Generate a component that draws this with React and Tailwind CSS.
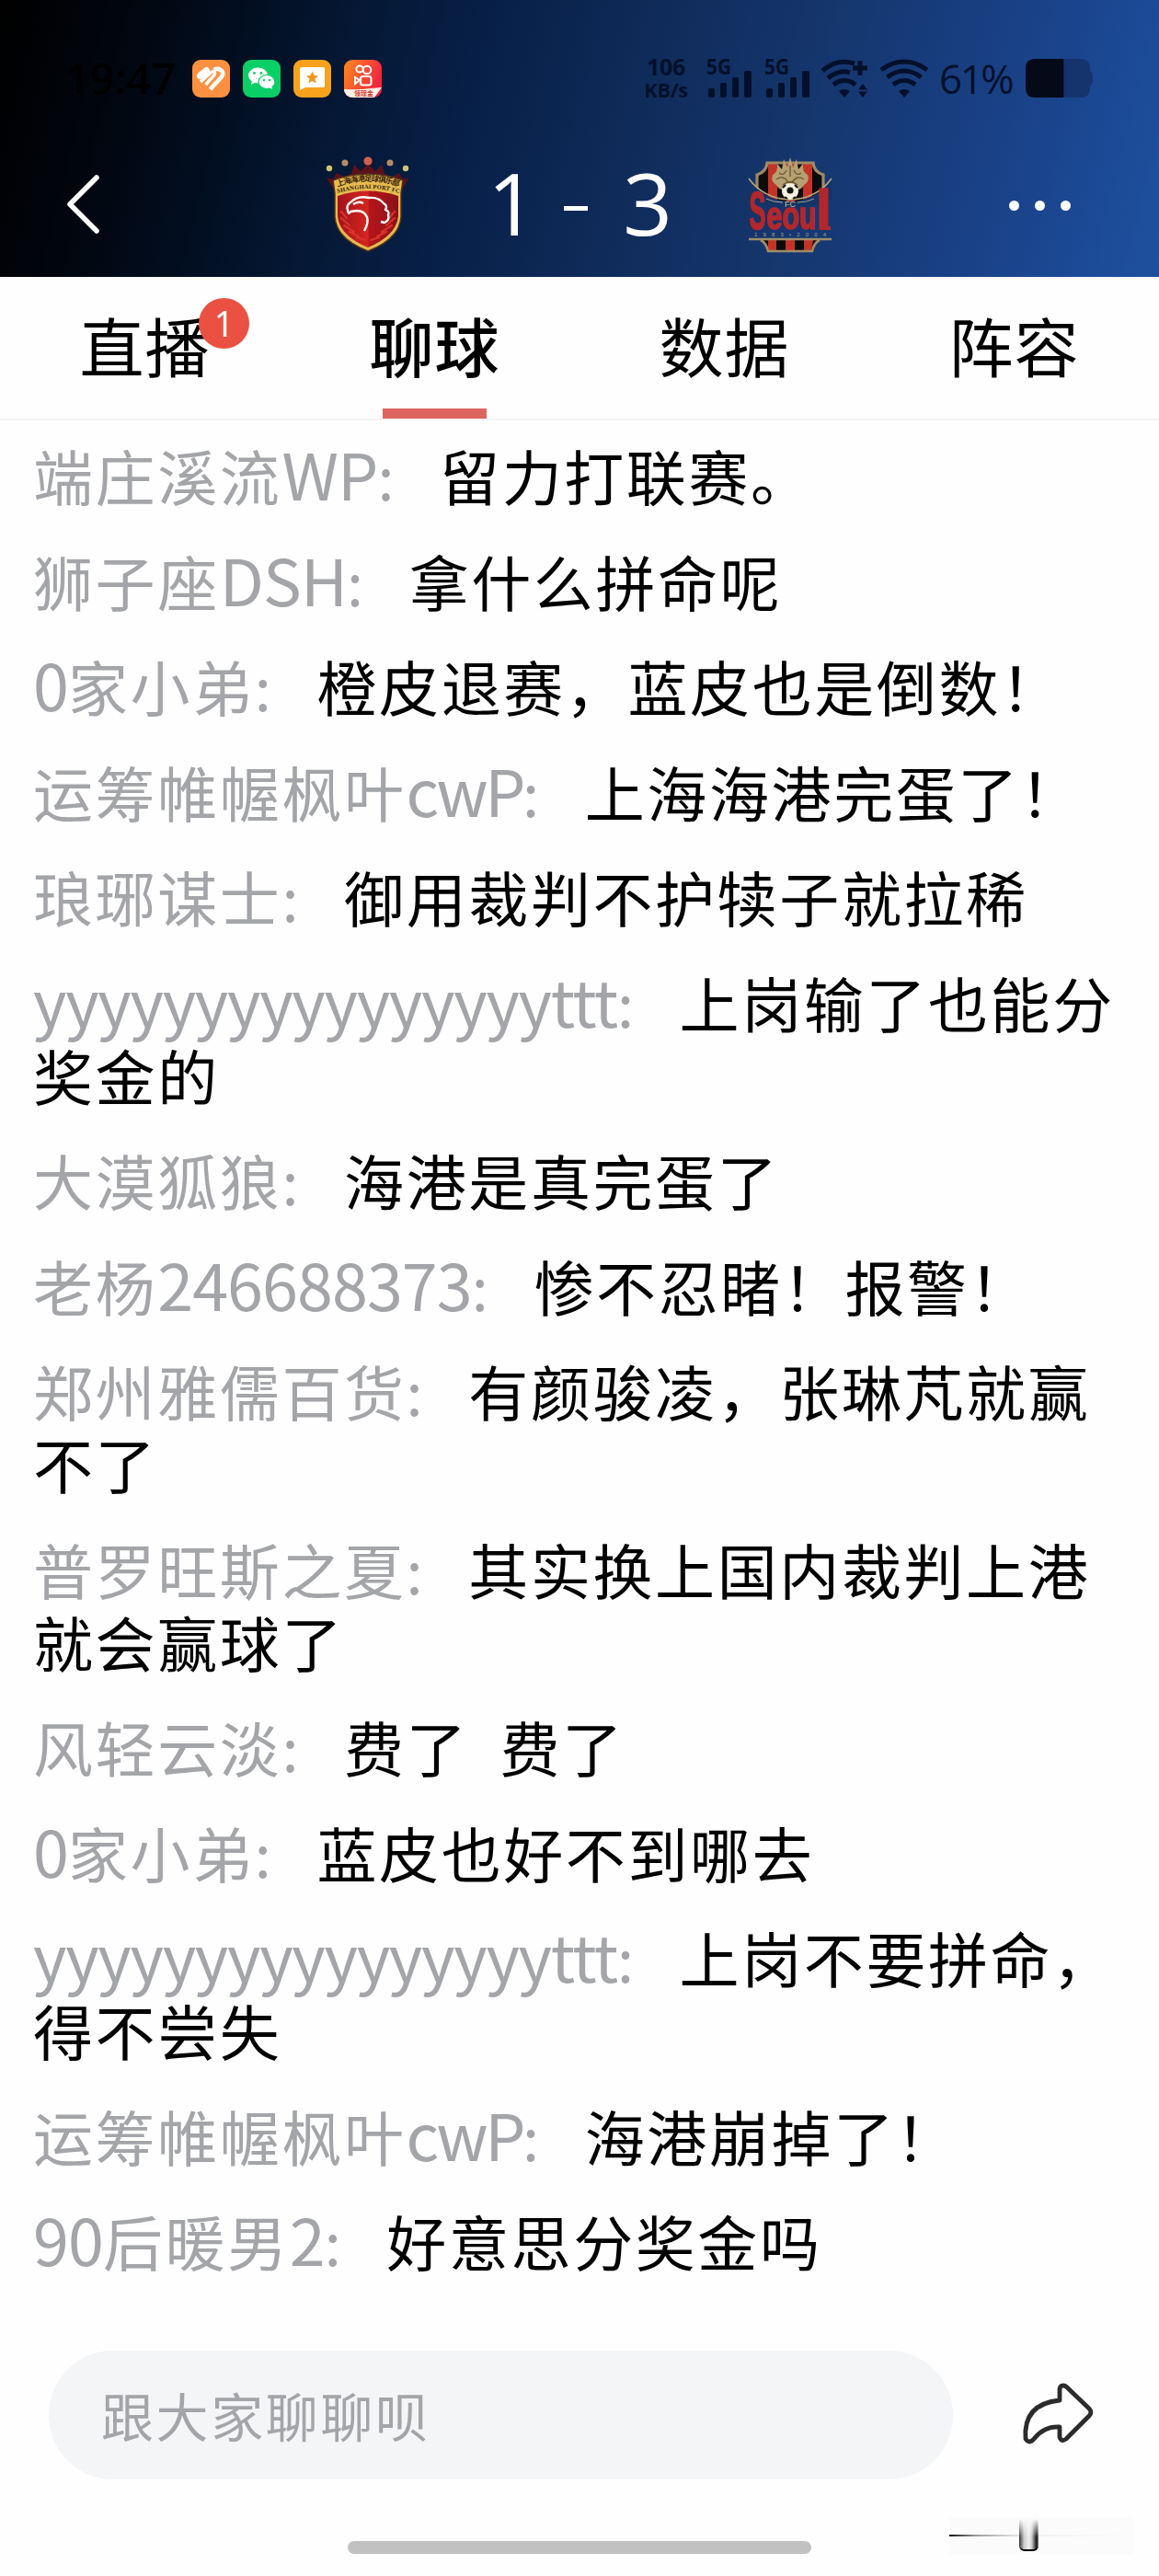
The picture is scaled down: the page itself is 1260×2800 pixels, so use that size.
const tabs = [
  { name: "直播", badge: 1 },
  { name: "聊球", active: true },
  { name: "数据" },
  { name: "阵容" },
];

const messages = [
  { user: "端庄溪流WP", text: "留力打联赛。" },
  { user: "狮子座DSH", text: "拿什么拼命呢" },
  { user: "0家小弟", text: "橙皮退赛，蓝皮也是倒数！" },
  { user: "运筹帷幄枫叶cwP", text: "上海海港完蛋了！", spacing: "tracking-[-3.4px]" },
  { user: "琅琊谋士", text: "御用裁判不护犊子就拉稀" },
  { user: "yyyyyyyyyyyyyyyyttt", text: "上岗输了也能分奖金的", spacing: "tracking-[-1.3px]" },
  { user: "大漠狐狼", text: "海港是真完蛋了" },
  { user: "老杨246688373", text: "惨不忍睹！报警！" },
  { user: "郑州雅儒百货", text: "有颜骏凌，张琳芃就赢不了" },
  { user: "普罗旺斯之夏", text: "其实换上国内裁判上港就会赢球了" },
  { user: "风轻云淡", text: "费了  费了" },
  { user: "0家小弟", text: "蓝皮也好不到哪去" },
  { user: "yyyyyyyyyyyyyyyyttt", text: "上岗不要拼命，得不尝失", spacing: "tracking-[-1.3px]" },
  { user: "运筹帷幄枫叶cwP", text: "海港崩掉了！", spacing: "tracking-[-3.4px]" },
  { user: "90后暖男2", text: "好意思分奖金吗" },
];

function AppIcons() {
  return (
    <div className="flex gap-[14px] ml-[20px]">
      <svg width="41" height="41" viewBox="0 0 41 41">
        <rect width="41" height="41" rx="9" fill="#fb9140" />
        <path d="M8.500 17.500 L15.500 11.500" stroke="#fff" strokeWidth="7" strokeLinecap="round" />
        <path d="M9 24 L20 14 Q22.500 12 24 13.500 Q25.500 15 23.500 17 L14.500 27" fill="none" stroke="#fff" strokeWidth="3.400" />
        <path d="M19.500 32 L31.500 19 Q35 15 31.500 11.500 Q28 8.500 23.500 11" fill="none" stroke="#fff" strokeWidth="4.600" />
      </svg>
      <svg width="41" height="41" viewBox="0 0 41 41">
        <rect width="41" height="41" rx="9" fill="#09cf66" />
        <ellipse cx="16.500" cy="17" rx="10.500" ry="8.500" fill="#fff" />
        <path d="M10 22 L9 27 L15 24Z" fill="#fff" />
        <ellipse cx="26" cy="24" rx="9" ry="7.500" fill="#fff" stroke="#09cf66" strokeWidth="1.200" />
        <path d="M28 30 L32 32 L31 27Z" fill="#fff" />
        <g fill="#09cf66">
          <circle cx="12.500" cy="14.500" r="1.400" />
          <circle cx="20" cy="14.500" r="1.400" />
          <circle cx="23" cy="22" r="1.200" />
          <circle cx="29" cy="22" r="1.200" />
        </g>
      </svg>
      <svg width="41" height="41" viewBox="0 0 41 41">
        <rect width="41" height="41" rx="9" fill="#f7a11d" />
        <path d="M9 8 H32 Q34 8 34 10 V28 Q34 30 32 30 H13 L7 33 V10 Q7 8 9 8Z" fill="#fff" />
        <path d="M20.500 12.500 L22.500 17 L27 17.500 L23.500 20.500 L24.500 25.500 L20.500 23 L16.500 25.500 L17.500 20.500 L14 17.500 L18.500 17Z" fill="#f0961a" />
      </svg>
      <svg width="41" height="41" viewBox="0 0 41 41">
        <defs>
          <linearGradient id="ks" x1="0" y1="0" x2="1" y2="0.400">
            <stop offset="0" stopColor="#ff8a1f" />
            <stop offset="1" stopColor="#f2253f" />
          </linearGradient>
          <clipPath id="ksClip">
            <rect width="41" height="41" rx="9" />
          </clipPath>
        </defs>
        <g clipPath="url(#ksClip)">
          <rect width="41" height="41" fill="url(#ks)" />
          <path d="M0 32 Q14 33 30 31 L41 30 L33 41 H0Z" fill="#fff3ea" />
          <g fill="none" stroke="#fff" strokeWidth="2">
            <circle cx="17" cy="10" r="3.600" />
            <circle cx="25" cy="11" r="4.200" />
            <rect x="18" y="18" width="11.500" height="9.500" rx="2.500" />
            <path d="M12 19 L17 22 L12 26Z" />
          </g>
          <text x="11" y="39" fontSize="7" fontWeight="700" fill="#d03428">领现金</text>
        </g>
      </svg>
    </div>
  );
}

function Signal() {
  return (
    <svg className="overflow-visible" width="50" height="42" viewBox="0 0 50 42" fill="#04102b">
      <text x="0" y="17" fontSize="23" fontWeight="700" fontFamily="Open Sans" textLength="27" lengthAdjust="spacingAndGlyphs">5G</text>
      <rect x="2" y="32" width="7" height="10" rx="2" />
      <rect x="15" y="26" width="7" height="16" rx="2" />
      <rect x="28" y="20" width="7" height="22" rx="2" />
      <rect x="41" y="13" width="8" height="29" rx="2" />
    </svg>
  );
}

function WifiPlus() {
  return (
    <svg width="52" height="43" viewBox="0 0 52 43" fill="none" stroke="#04102b" strokeWidth="5">
      <path d="M1 13 Q17 -1 36 5" />
      <path d="M7 21 Q20 11 31 15" />
      <path d="M13 28 Q25 19 37 28" />
      <path d="M19 35 Q25 31 31 35 L25 42Z" fill="#04102b" stroke="none" />
      <path d="M42 2 V18 M34 10 H50" />
      <path d="M45 27 L50 33.500 H40Z M45 42 L50 35.500 H40Z" fill="#04102b" stroke="none" />
    </svg>
  );
}

function Wifi() {
  return (
    <svg width="52" height="43" viewBox="0 0 52 43" fill="none" stroke="#04102b" strokeWidth="5">
      <path d="M1 12 Q26 -6 51 12" />
      <path d="M7.500 20 Q26 6 44.500 20" />
      <path d="M14 28 Q26 19 38 28" />
      <path d="M20 35 Q26 31 32 35 L26 42Z" fill="#04102b" stroke="none" />
    </svg>
  );
}

function StatusBar() {
  return (
    <div className="flex items-center h-[42px] mt-[64px]">
      <div className="w-[118px] ml-[71px] text-[47px] leading-[42px] font-['Open_Sans'] font-semibold text-black">
        19:47
      </div>
      <AppIcons />
      <div className="flex flex-col items-center ml-[283px] w-[52px] text-[#04102b] font-bold text-[25px] leading-[25px] tracking-[-0.5px] font-['Open_Sans']">
        <span>106</span>
        <span className="text-[22px]">KB/s</span>
      </div>
      <div className="flex ml-[18px] gap-[13px]">
        <Signal />
        <Signal />
      </div>
      <div className="ml-[12px] flex gap-[12px]">
        <WifiPlus />
        <Wifi />
      </div>
      <div className="ml-[12px] w-[94px] text-[44px] leading-[42px] tracking-[-2.5px] font-['Open_Sans'] font-medium text-[#04102b] whitespace-nowrap">61%</div>
      <svg width="74" height="42" viewBox="0 0 74 42">
        <path d="M42 0 H60 Q70 0 70 10 V13 Q73 14 73 21 Q73 28 70 29 V32 Q70 42 60 42 H42Z" fill="#15346e" />
        <path d="M10 0 H41.500 V42 H10 Q0 42 0 32 V10 Q0 0 10 0Z" fill="#040a17" />
      </svg>
    </div>
  );
}

function ShanghaiCrest() {
  return (
    <svg width="92" height="106" viewBox="0 0 92 106">
      <defs>
        <linearGradient id="sh" x1="0" y1="0" x2="1" y2="0">
          <stop offset="0" stopColor="#a3131a" />
          <stop offset="0.500" stopColor="#d5251f" />
          <stop offset="0.520" stopColor="#b5161a" />
          <stop offset="1" stopColor="#8c1118" />
        </linearGradient>
        <path id="shArc" d="M13 33 Q46 21 80 33" />
        <path id="shArc2" d="M13 40 Q46 30 80 40" />
      </defs>
      <path d="M1 23 L8 25 L12 18 L20 22 L28 19 L31 9 L38 16 L46 8 L54 16 L61 9 L64 19 L72 22 L80 18 L84 25 L91 23 L82 38 H10Z" fill="#5c1118" />
      <circle cx="4" cy="13" r="3.200" fill="#d0c474" />
      <circle cx="21" cy="7" r="3.500" fill="#b98a63" />
      <circle cx="46" cy="5" r="4.600" fill="#d2604a" />
      <circle cx="70" cy="7" r="3.500" fill="#b98a63" />
      <circle cx="87" cy="13" r="3.200" fill="#d0c474" />
      <path d="M8 26 Q46 12 84 26 L82 40 V66 Q80 90 46 103 Q12 90 10 66 V40Z" fill="#e6bb4e" stroke="#53301d" strokeWidth="1.500" />
      <path d="M13 43 Q46 32 79 43 V65 Q77 86 46 99 Q15 86 13 65Z" fill="url(#sh)" />
      <g fill="none" stroke="#d8332c" strokeWidth="2.200" strokeLinecap="round">
        <path d="M17 60 L23 67 M17 67 L26 75 M20 75 L31 82 M26 82 L36 87 M34 88 L43 91" />
        <path d="M75 60 L69 67 M75 67 L66 75 M72 75 L61 82 M66 82 L56 87 M58 88 L49 91" />
      </g>
      <path
        d="M42 81 Q47 72 45 66 Q42 59 34 59 L27 60 Q25 64 24 59 Q22 53 27 50 Q35 42 47 45 Q58 44 63 51 Q68 54 65 58 Q70 60 68 64 Q70 69 64 72 L60 71 M30 52 Q36 48 41 51"
        fill="none"
        stroke="#fff"
        strokeWidth="2.400"
        strokeLinejoin="round"
      />
      <text fontSize="8.500" fontWeight="700" fill="#3a230d">
        <textPath href="#shArc" textLength="68">上海海港足球俱乐部</textPath>
      </text>
      <text fontSize="6.500" fontWeight="700" fill="#2c1a0c" fontFamily="Liberation Serif">
        <textPath href="#shArc2" textLength="68">SHANGHAI PORT FC</textPath>
      </text>
    </svg>
  );
}

function SeoulCrest() {
  return (
    <svg width="92" height="106" viewBox="0 0 92 106">
      <defs>
        <clipPath id="seTop">
          <path d="M22 8 H70 Q71 18 81 20 V44 Q46 60 11 44 V20 Q21 18 22 8Z" />
        </clipPath>
      </defs>
      <g clipPath="url(#seTop)">
        <rect width="92" height="60" fill="#0b0a0d" />
        <rect x="22" width="10" height="60" fill="#c33327" />
        <rect x="42" width="9" height="60" fill="#c33327" />
        <rect x="60" width="10" height="60" fill="#c33327" />
      </g>
      <path d="M10 36 V20 Q20 17 21 7 H71 Q72 17 82 20 V36" fill="none" stroke="#9d8a63" strokeWidth="3.200" />
      <path d="M27 20 Q33 17 32 8 L37 14 L39 3 L43 12 L46 1 L49 12 L53 3 L55 14 L60 8 Q59 17 65 20 Q68 27 61 31 Q58 38 46 37 Q34 38 31 31 Q24 27 27 20Z" fill="#b4a073" />
      <g fill="none" stroke="#6c592f" strokeWidth="1.300">
        <path d="M34 18 Q39 22 42 15 M58 18 Q53 22 50 15 M46 10 V22 M31 25 Q38 20 43 27 Q46 31 49 27 Q54 20 61 25 M38 31 Q46 24 54 31" />
      </g>
      <path d="M1 24 Q17 48 46 49 Q75 48 91 24 V46 Q75 56 46 56 Q17 56 1 46Z" fill="#143468" />
      <path d="M1 24 Q17 46 46 47 Q75 46 91 24" fill="none" stroke="#b9a67a" strokeWidth="1.600" />
      <circle cx="46" cy="38" r="9" fill="#f5f0df" />
      <circle cx="46" cy="37" r="3.600" fill="#141414" />
      <path d="M38 34 L41 31 M51 31 L54 34 M40 44 L43 46 M49 46 L52 44" stroke="#141414" strokeWidth="2" />
      <g fill="#b2272c" stroke="#b2272c" strokeWidth="1.600" fontFamily="Liberation Sans" fontWeight="700">
        <text x="1" y="79" fontSize="58" textLength="18" lengthAdjust="spacingAndGlyphs">S</text>
        <text x="20" y="79" fontSize="42" textLength="54" lengthAdjust="spacingAndGlyphs">eou</text>
        <text x="74" y="79" fontSize="62" textLength="17" lengthAdjust="spacingAndGlyphs">l</text>
        <path d="M80 78 H90" strokeWidth="4" />
      </g>
      <text x="40" y="55" fontSize="9" fill="#c9bb91" fontFamily="Liberation Sans">FC</text>
      <path d="M20 46 Q28 50 38 50 M54 50 Q64 50 72 46" fill="none" stroke="#a8a284" />
      <text x="7" y="87" fontSize="6" textLength="78" fill="#a7a58f" fontFamily="Liberation Sans">1983•2004</text>
      <path d="M15 91 H77 L70 103 H22Z" fill="#0b0a0d" />
      <path d="M22 91 H31 V103 H22Z M41 91 H51 V103 H41Z M61 91 H71 L69 103 H61Z" fill="#c33327" />
      <path d="M1 90 H91 M14 91 Q20 94 22 103 H70 Q72 94 78 91" fill="none" stroke="#a08d66" strokeWidth="2.600" />
    </svg>
  );
}

function Header() {
  return (
    <div className="h-[301px] flex flex-col bg-[linear-gradient(104deg,#000000_0%,#01040a_8%,#020e20_20%,#051835_30%,#08214a_42%,#0f2b59_54%,#15366d_68%,#194187_84%,#1e509f_100%)]">
      <StatusBar />
      <div className="flex items-center h-[110px] mt-[62px]">
        <svg className="ml-[70px]" width="42" height="68" viewBox="0 0 42 68">
          <path d="M35 4 L6 33 L35 62" fill="none" stroke="#fff" strokeWidth="5.500" strokeLinecap="round" strokeLinejoin="round" />
        </svg>
        <div className="ml-[242px]">
          <ShanghaiCrest />
        </div>
        <div className="flex justify-between items-center ml-[84px] mb-[6px] w-[201px] text-white text-[94px] leading-[110px] font-['Open_Sans']">
          <span>1</span>
          <span className="w-[26px] h-[5px] bg-white mt-[12px] mr-[10px]"></span>
          <span>3</span>
        </div>
        <div className="ml-[82px]">
          <SeoulCrest />
        </div>
        <div className="flex gap-[17px] ml-[192px]">
          <span className="w-[11px] h-[11px] rounded-full bg-white"></span>
          <span className="w-[11px] h-[11px] rounded-full bg-white"></span>
          <span className="w-[11px] h-[11px] rounded-full bg-white"></span>
        </div>
      </div>
    </div>
  );
}

function Tabs() {
  return (
    <div className="grid grid-cols-4 h-[156px] border-b-2 border-[#f3f3f3]">
      {tabs.map((tab) => (
        <div key={tab.name} className="relative flex flex-col items-center">
          <span className={tab.active ? "mt-[30px] text-[70px] leading-[88px] tracking-[1px] font-medium" : "mt-[30px] text-[70px] leading-[88px] tracking-[1px]"}>
            {tab.name}
          </span>
          {tab.active && <div className="mt-[25px] w-[113px] h-[11px] bg-[#de655f]"></div>}
          {tab.badge && (
            <span className="absolute left-[216px] top-[23px] w-[55px] h-[55px] rounded-full bg-[#ea5143] text-white text-[38px] leading-[55px] text-center font-['Open_Sans']">
              {tab.badge}
            </span>
          )}
        </div>
      ))}
    </div>
  );
}

// latin letters and digits are set a bit larger and tighter than the hanzi
function UserName({ name, spacing = "tracking-[-0.9px]" }) {
  return (
    <span className="text-[#a3a5a8] mr-[47px]">
      {name.split(/([A-Za-z0-9]+)/).filter(Boolean).map((part, i) =>
        /[A-Za-z0-9]/.test(part) ? (
          <span key={i} className={`text-[70px] leading-none ${spacing}`}>{part}</span>
        ) : (
          part
        )
      )}
      :
    </span>
  );
}

function App() {
  return (
    <div className="w-[1260px] h-[2800px] bg-[#fefefe] text-black overflow-hidden font-['Noto_Sans_CJK_SC',sans-serif]">
      <Header />
      <Tabs />
      <div className="h-[2098px] pt-[20px] pl-[36px] pr-[40px] flex flex-col gap-[35.5px] text-[65px] leading-[79px] tracking-[2.6px]">
        {messages.map((msg, i) => (
          <p key={i} className="whitespace-pre-wrap break-all">
            <UserName name={msg.user} spacing={msg.spacing} />
            {msg.text}
          </p>
        ))}
      </div>
      <div className="flex items-center h-[140px] pl-[53px]">
        <div className="w-[983px] h-[140px] rounded-full bg-[#f3f5f7] pl-[57px] flex items-center text-[57px] tracking-[2.6px] text-[#a3a5a8]">
          <span>跟大家聊聊呗</span>
        </div>
        <svg className="ml-[73px] mb-[4px]" width="80" height="72" viewBox="0 0 80 72">
          <path
            d="M43 22 V10 Q44 4 50 7 L75 31 Q79 35 75 39 L50 64 Q45 68 43 62 V51 Q26 50 15 64 Q10 70 6 64 Q3 26 43 22Z"
            fill="none"
            stroke="#2b2b2b"
            strokeWidth="4.800"
            strokeLinejoin="round"
          />
        </svg>
      </div>
      <div className="relative h-[105px] pt-[67px]">
        <div className="mx-auto w-[504px] h-[14px] rounded-full bg-[#c1c1c1]"></div>
        <div className="absolute left-[1032px] top-[41px] w-[200px] h-[40px] bg-[#fbfbfb] flex items-center">
          <div className="w-full h-[2px] bg-[linear-gradient(90deg,#111_0%,#999_14%,#ddd_34%,#f4f4f4_55%,#fbfbfb_100%)]"></div>
        </div>
        <div className="absolute left-[1108px] top-[43px] w-[21px] h-[35px] rounded-b-[6px] border-b-2 border-black bg-[linear-gradient(180deg,#fbfbfb_0%,transparent_60%),linear-gradient(90deg,#333_0%,#ccc_25%,#eee_50%,#ccc_65%,#111_90%,#888_100%)]"></div>
      </div>
    </div>
  );
}

export default App;
